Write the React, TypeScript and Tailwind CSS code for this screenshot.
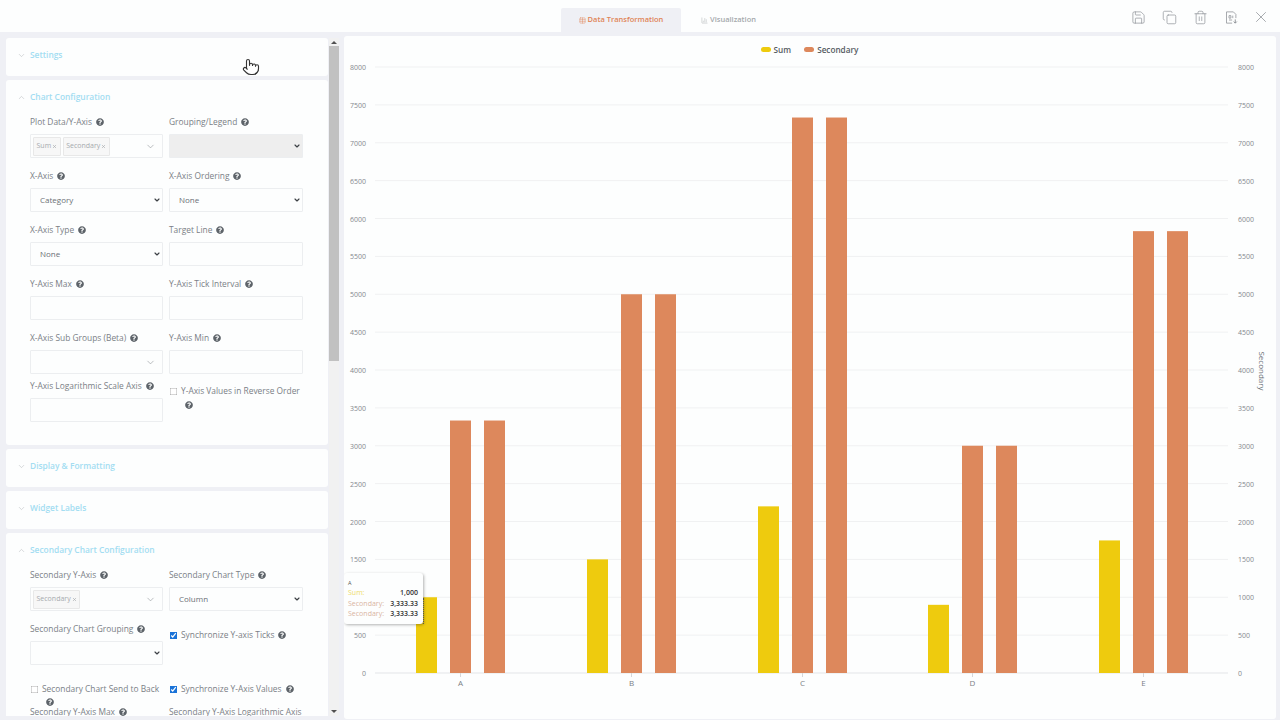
import { useState } from 'react'
import { ChevronDown, ChevronUp, Copy, Pointer, Save, Trash2, X, BarChart3, Table } from 'lucide-react'
import { FaQuestionCircle } from 'react-icons/fa'

const FONT = "font-['Open_Sans',sans-serif]"

function Help({ className = '' }: { className?: string }) {
  return <FaQuestionCircle className={`inline-block w-[8px] h-[8px] text-[#5d6369] shrink-0 ${className}`} />
}

function Label({ text, help = true }: { text: string; help?: boolean }) {
  return (
    <div className="flex items-center gap-[4px] h-[13px] text-[8.4px] leading-[13px] text-[#7b8086] whitespace-nowrap">
      <span>{text}</span>
      {help && <Help />}
    </div>
  )
}

function Select({ value, disabled }: { value?: string; disabled?: boolean }) {
  const [v, setV] = useState(value ?? '')
  return (
    <div className="relative">
      <select
        value={v}
        disabled={disabled}
        onChange={e => setV(e.target.value)}
        className={`block appearance-none w-full h-[24px] pl-[9px] text-[8px] text-[#6b7076] border border-[#eceef0] rounded-[1px] outline-none ${disabled ? 'bg-[#eeeeee]' : 'bg-[#fdfefe]'}`}
      >
        <option value={value ?? ''}>{value ?? ''}</option>
      </select>
      <ChevronDown className="absolute right-[2.5px] top-[8px] w-[8px] h-[8px] text-[#3c4045] pointer-events-none" strokeWidth={3.5} />
    </div>
  )
}

function TextInput() {
  return <input className="block w-full h-[24px] bg-[#fdfefe] border border-[#eceef0] rounded-[1px] outline-none" />
}

function Chip({ text }: { text: string }) {
  return (
    <span className="flex items-center gap-[1px] h-[19px] px-[2.5px] text-[7px] text-[#a6aaae] bg-[#f7f7f7] border border-[#e8e8e8] rounded-[1px]">
      {text}
      <X className="w-[5px] h-[5px]" strokeWidth={3} />
    </span>
  )
}

function MultiSelect({ chips }: { chips: string[] }) {
  return (
    <div className="flex items-center h-[24px] pl-[2px] pr-[6px] gap-[2px] border border-[#eceef0] rounded-[1px] bg-[#fdfefe]">
      {chips.map(c => <Chip key={c} text={c} />)}
      <ChevronDown className="ml-auto w-[11px] h-[11px] text-[#8a8f94]" strokeWidth={1.25} />
    </div>
  )
}

function Check({ text, checked, className = '' }: { text: string; checked?: boolean; className?: string }) {
  return (
    <label className={`flex items-start gap-[4px] text-[8.4px] leading-[12px] text-[#7b8086] whitespace-nowrap ${className}`}>
      <span className="w-[8px] h-[8px] mt-[2px] flex items-center justify-center shrink-0">
        <input type="checkbox" defaultChecked={checked} className="w-[13px] h-[13px] m-0 shrink-0 scale-[0.58] accent-[#1a73d8]" />
      </span>
      <span>{text}</span>
    </label>
  )
}

function Section({ title, open, children }: { title: string; open?: boolean; children?: React.ReactNode }) {
  const Icon = open ? ChevronUp : ChevronDown
  return (
    <section className={`bg-[#fdfefe] rounded-[3px] shrink-0 ${open ? '' : 'pb-[4px]'}`}>
      <div className="flex items-center gap-[4px] pl-[11px] h-[34px]">
        <Icon className="w-[9px] h-[9px] text-[#b9bdc1]" strokeWidth={1.5} />
        <span className="text-[8.4px] font-semibold text-[#a3ddf2]">{title}</span>
      </div>
      {children}
    </section>
  )
}

function Field({ label, children }: { label: string; children: React.ReactNode }) {
  return (
    <div>
      <Label text={label} />
      <div className="mt-[6px]">{children}</div>
    </div>
  )
}

function ChartConfig() {
  return (
    <div className="grid grid-cols-[133px_134px] gap-x-[6px] pl-[24px] pt-[1px] pb-[23px]">
      <div className="mb-[11px]"><Field label="Plot Data/Y-Axis"><MultiSelect chips={['Sum', 'Secondary']} /></Field></div>
      <div className="mb-[11px]"><Field label="Grouping/Legend"><Select disabled /></Field></div>
      <div className="mb-[11px]"><Field label="X-Axis"><Select value="Category" /></Field></div>
      <div className="mb-[11px]"><Field label="X-Axis Ordering"><Select value="None" /></Field></div>
      <div className="mb-[11px]"><Field label="X-Axis Type"><Select value="None" /></Field></div>
      <div className="mb-[11px]"><Field label="Target Line"><TextInput /></Field></div>
      <div className="mb-[11px]"><Field label="Y-Axis Max"><TextInput /></Field></div>
      <div className="mb-[11px]"><Field label="Y-Axis Tick Interval"><TextInput /></Field></div>
      <div className="mb-[5px]"><Field label="X-Axis Sub Groups (Beta)"><MultiSelect chips={[]} /></Field></div>
      <div className="mb-[5px]"><Field label="Y-Axis Min"><TextInput /></Field></div>
      <div><Field label="Y-Axis Logarithmic Scale Axis"><TextInput /></Field></div>
      <div className="pt-[6px]">
        <Check text="Y-Axis Values in Reverse Order" />
        <div className="pl-[16px] leading-[12px]"><Help /></div>
      </div>
    </div>
  )
}

function SecondaryConfig() {
  return (
    <div className="grid grid-cols-[133px_134px] gap-x-[6px] pl-[24px] pt-[1px]">
      <div className="mb-[11px]"><Field label="Secondary Y-Axis"><MultiSelect chips={['Secondary']} /></Field></div>
      <div className="mb-[11px]"><Field label="Secondary Chart Type"><Select value="Column" /></Field></div>
      <div className="mb-[18px]"><Field label="Secondary Chart Grouping"><Select /></Field></div>
      <div className="pt-[7px] flex items-start gap-[4px]">
        <Check text="Synchronize Y-axis Ticks" checked />
        <Help className="mt-[2px]" />
      </div>
      <div>
        <Check text="Secondary Chart Send to Back" />
        <div className="pl-[16px] h-[10px] leading-[10px]"><Help /></div>
      </div>
      <div className="flex items-start gap-[4px]">
        <Check text="Synchronize Y-Axis Values" checked />
        <Help className="mt-[2px]" />
      </div>
      <Label text="Secondary Y-Axis Max" />
      <Label text="Secondary Y-Axis Logarithmic Axis" help={false} />
    </div>
  )
}

function Scrollbar() {
  return (
    <div className="w-[10px] shrink-0 bg-[#f1f1f1] flex flex-col items-center">
      <div className="h-[8px] w-full flex items-center justify-center"><div className="w-0 h-0 border-x-[3px] border-x-transparent border-b-[3px] border-b-[#505050]" /></div>
      <div className="w-full h-[315px] bg-[#c1c1c1]" />
      <div className="mt-auto h-[10px] flex items-center"><div className="w-0 h-0 border-x-[3px] border-x-transparent border-t-[3px] border-t-[#505050]" /></div>
    </div>
  )
}

// page with a download arrow, no matching icon in lucide
function ExportIcon() {
  return (
    <svg viewBox="0 0 24 24" className="w-[15px] h-[15px]" fill="none" stroke="currentColor" strokeWidth={1.2}>
      <path d="M13 21H4V3h11l4 4v6" />
      <path d="M8 9h3v4H8zM14 9v4M8 16h5" />
      <path d="M18 15v6M15.5 18.5 18 21l2.5-2.5" strokeWidth={1.5} />
    </svg>
  )
}

// chart geometry is in page pixels, the svg starts at the card origin
const OX = 344
const Y0 = 637
const PER = 606 / 8000
const TICKS = Array.from({ length: 17 }, (_, i) => i * 500)
const GROUPS = [
  { name: 'A', x: 416, sum: 1000, sec: 3333 },
  { name: 'B', x: 587, sum: 1500, sec: 5000 },
  { name: 'C', x: 758, sum: 2200, sec: 7333 },
  { name: 'D', x: 928, sum: 900, sec: 3000 },
  { name: 'E', x: 1099, sum: 1750, sec: 5833 },
]

function Chart() {
  return (
    <svg viewBox="0 0 932 683" className="block w-[932px] h-[683px]" fontFamily="'Open Sans',sans-serif">
      {TICKS.map(t => {
        const y = Y0 - t * PER
        return (
          <g key={t}>
            <line x1={375 - OX} x2={1228 - OX} y1={y} y2={y} stroke={t === 0 ? '#e3e5e8' : '#f0f1f2'} />
            {/* the tooltip sits on top of the left 1000 label */}
            {t !== 1000 && <text x={366 - OX} y={y + 3} textAnchor="end" fontSize="7" fill="#85898e">{t}</text>}
            <text x={1238 - OX} y={y + 3} fontSize="7" fill="#85898e">{t}</text>
          </g>
        )
      })}
      {GROUPS.map(g => (
        <g key={g.name}>
          <rect x={g.x - OX} y={Y0 - g.sum * PER} width={21} height={g.sum * PER} fill="#eecb0e" />
          <rect x={g.x + 34 - OX} y={Y0 - g.sec * PER} width={21} height={g.sec * PER} fill="#dd885c" />
          <rect x={g.x + 68 - OX} y={Y0 - g.sec * PER} width={21} height={g.sec * PER} fill="#dd885c" />
          <line x1={g.x + 44.5 - OX} x2={g.x + 44.5 - OX} y1={Y0} y2={Y0 + 4} stroke="#d5d7da" />
          <text x={g.x + 44.5 - OX} y={Y0 + 13} textAnchor="middle" fontSize="8" fill="#7b8086">{g.name}</text>
        </g>
      ))}
      <text transform={`translate(${1259 - OX} 335) rotate(90)`} textAnchor="middle" fontSize="8" fill="#6b7076">Secondary</text>
    </svg>
  )
}

function Tooltip() {
  return (
    <div className="absolute left-0 top-[537px] w-[79px] h-[51px] bg-[#fdfefe] rounded-[3px] shadow-[1px_1px_3px_rgba(0,0,0,0.3)] pl-[4px] pr-[5px] pt-[6px] text-[7px] leading-[10.5px]">
      <div className="text-[5.5px] leading-[8px] text-[#555] mb-[1px]">A</div>
      <div className="flex justify-between"><span className="text-[#eedc6a]">Sum:</span><b className="font-semibold text-[#333]">1,000</b></div>
      <div className="flex justify-between"><span className="text-[#d9b5a3]">Secondary:</span><b className="font-semibold text-[#333]">3,333.33</b></div>
      <div className="flex justify-between"><span className="text-[#d9b5a3]">Secondary:</span><b className="font-semibold text-[#333]">3,333.33</b></div>
      <div className="absolute left-[79px] top-[25px] h-[26px] border-l border-dotted border-[#555]" />
    </div>
  )
}

export default function App() {
  return (
    <div className={`${FONT} relative w-[1280px] h-[720px] overflow-hidden bg-[#eff0f5] flex flex-col`}>
      {/* Top bar */}
      <header className="h-[32px] shrink-0 bg-[#fdfefe] flex items-end relative">
        <div className="flex ml-[561px] h-[24px]">
          <div className="w-[120px] flex items-center justify-center gap-[2px] bg-[#eff0f5] rounded-t-[2px] text-[7.5px] font-semibold text-[#e08457]">
            <Table className="w-[7px] h-[7px]" strokeWidth={1.5} />
            Data Transformation
          </div>
          <div className="w-[95px] flex items-center justify-center gap-[2px] text-[7.5px] font-semibold text-[#a5a9ad]">
            <BarChart3 className="w-[7px] h-[7px]" strokeWidth={1.5} />
            Visualization
          </div>
        </div>
        <div className="absolute right-[10px] top-[8px] flex items-center gap-[16px] text-[#8b8f94]">
          <Save className="w-[15px] h-[15px]" strokeWidth={1.1} />
          <Copy className="w-[15px] h-[15px]" strokeWidth={1.1} />
          <Trash2 className="w-[15px] h-[15px]" strokeWidth={1.1} />
          <ExportIcon />
          <X className="w-[18px] h-[18px] -ml-[3px]" strokeWidth={1} />
        </div>
      </header>

      <main className="flex flex-1 min-h-0 pt-[4px] pb-[1px]">
        {/* Settings column */}
        <div className="w-[344px] shrink-0 flex pl-[6px] pr-[5px] pt-[2px] pb-[3px] min-h-0">
          <div className="flex-1 flex flex-col gap-[4px] overflow-hidden pr-[1px]">
            <Section title="Settings" />
            <Section title="Chart Configuration" open><ChartConfig /></Section>
            <Section title="Display & Formatting" />
            <Section title="Widget Labels" />
            <Section title="Secondary Chart Configuration" open><SecondaryConfig /></Section>
          </div>
          <Scrollbar />
        </div>

        {/* Chart card */}
        <div className="relative w-[932px] bg-[#fdfefe] rounded-[3px] overflow-hidden">
          <div className="absolute inset-x-0 top-0 flex justify-center items-center gap-[13px] h-[28px] text-[8.2px] font-semibold text-[#555b62] pr-[1px]">
            <span className="flex items-center gap-[3px]"><i className="w-[10px] h-[5px] rounded-full bg-[#eecb0e]" />Sum</span>
            <span className="flex items-center gap-[3px]"><i className="w-[10px] h-[5px] rounded-full bg-[#dd885c]" />Secondary</span>
          </div>
          <Chart />
          <Tooltip />
        </div>
      </main>

      {/* mouse cursor from the recording */}
      <Pointer className="absolute left-[242px] top-[58px] w-[18px] h-[18px] text-[#333] fill-white" strokeWidth={1.5} />
    </div>
  )
}
